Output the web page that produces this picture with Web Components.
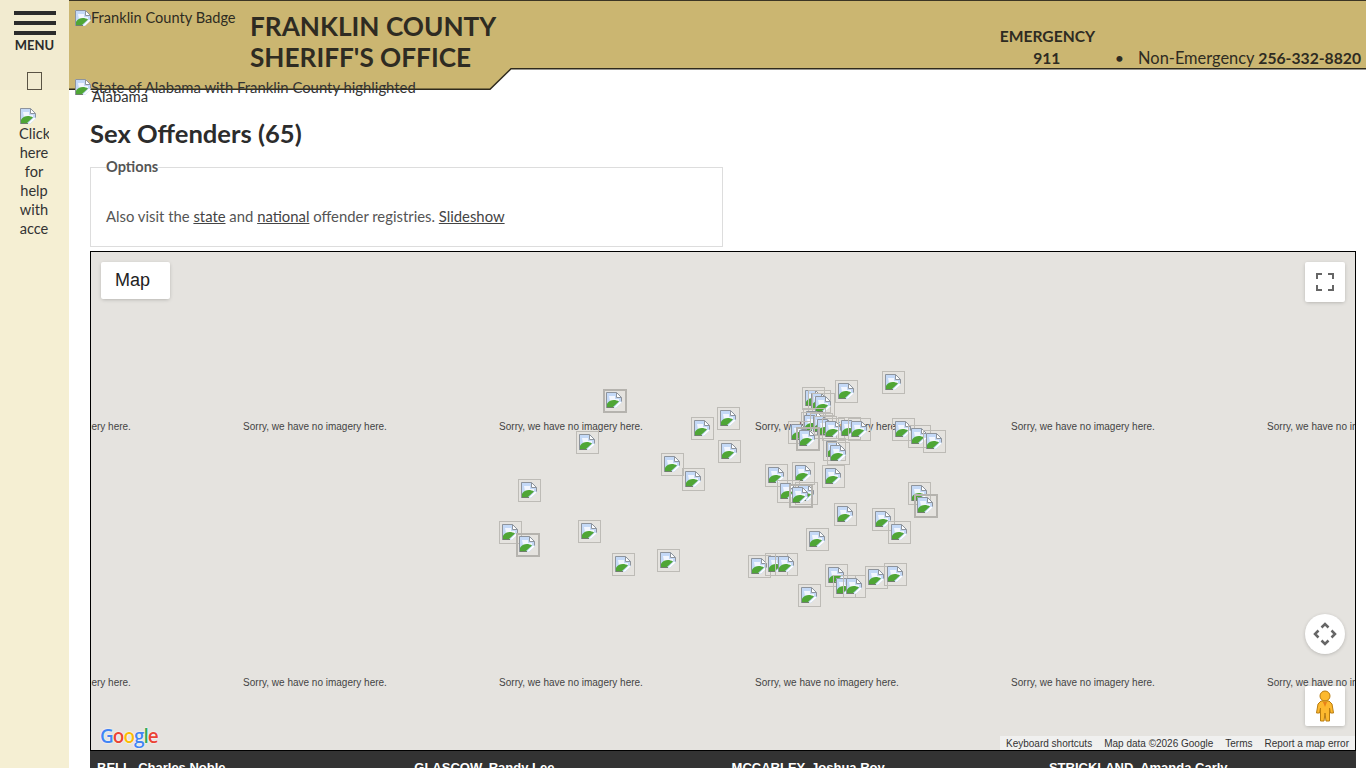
<!DOCTYPE html>
<html lang="en">
<head>
<meta charset="utf-8">
<title>Sex Offenders - Franklin County Sheriff's Office</title>
<style>
  html, body { margin: 0; height: 100%; overflow: hidden; background: #fff; }
  body { font-family: Lato, "Liberation Sans", sans-serif; color: #333; }
</style>
</head>
<body>
<sheriff-page>
  <side-bar slot="side"></side-bar>
  <site-header slot="head"></site-header>
  <page-content slot="main">
    <offender-map></offender-map>
    <offender-list></offender-list>
  </page-content>
</sheriff-page>

<script>
// chrome's broken image picture, used everywhere the site lost its images
const brokenIcon = /* html */ `
  <svg class="broken" width="16" height="16" viewBox="0 0 16 16" aria-hidden="true">
    <path d="M0 0H10.500L16 5.500V10L10 16H0Z" fill="#c4d9f7"/>
    <path d="M10.500 1L15 5.500H10.500Z" fill="#fff"/>
    <path d="M3 4H9V7H13V9H4Z" fill="#f2f6fe"/>
    <path d="M1 15V11.500C4 7.500 9 7 13 9.500L7 15Z" fill="#4fa636"/>
    <path d="M8 15.500L14 9.500L15.500 10.500L10 15.500Z" fill="#fff"/>
    <path d="M.5 15.500V.5H10.500L15.500 5.500V9.500" fill="none" stroke="#8e949c"/>
    <path d="M10.500 .5V5.500H15.500" fill="none" stroke="#8e949c"/>
    <path d="M.5 15.500H8" fill="none" stroke="#6f7f6c"/>
  </svg>`;

class BrokenImg extends HTMLElement {
  constructor() {
    super();
    this.attachShadow({ mode: 'open' });
    this.shadowRoot.innerHTML = /* html */ `
      <style>
        :host { display: inline-block; vertical-align: top; line-height: 0; white-space: nowrap; }
        .broken { display: inline-block; vertical-align: top; }
        .alt { line-height: 16px; vertical-align: top; }
      </style>
      ${brokenIcon}<span class="alt"><slot></slot></span>`;
  }
}
customElements.define('broken-img', BrokenImg);

class SheriffPage extends HTMLElement {
  constructor() {
    super();
    this.attachShadow({ mode: 'open' });
    this.shadowRoot.innerHTML = /* html */ `
      <style>
        :host { display: grid; grid-template-columns: 69px 1fr; grid-template-rows: 90px 1fr; height: 768px; overflow: hidden; }
        .side { grid-row: 1 / 3; grid-column: 1; display: flex; min-height: 0; }
        .head { grid-row: 1; grid-column: 2; display: flex; min-width: 0; }
        .main { grid-row: 2; grid-column: 2; min-width: 0; min-height: 0; }
      </style>
      <div class="side"><slot name="side"></slot></div>
      <div class="head"><slot name="head"></slot></div>
      <div class="main"><slot name="main"></slot></div>`;
  }
}
customElements.define('sheriff-page', SheriffPage);

class SideBar extends HTMLElement {
  constructor() {
    super();
    this.attachShadow({ mode: 'open' });
    this.shadowRoot.innerHTML = /* html */ `
      <style>
        :host { display: flex; flex-direction: column; width: 69px; background: #f5efd3; }
        .top { height: 90px; box-sizing: border-box; background: #f2ebd0; padding-top: 11px; display: flex; flex-direction: column; align-items: center; }
        .bars { width: 42px; display: flex; flex-direction: column; gap: 6px; }
        .bars i { display: block; height: 4px; background: #2b2b2b; }
        .label { font-weight: 700; font-size: 13px; line-height: 16px; color: #2b2b2b; margin-top: 2px; }
        .tofu { width: 13px; height: 16px; border: 1px solid #5a5344; margin-top: 19px; }
        .help { margin: 18px 0 0 19px; width: 30px; overflow: hidden; text-align: center; font-size: 14.6px; line-height: 19px; color: #333; }
        .help .broken { display: block; margin-left: 1px; }
      </style>
      <div class="top">
        <div class="bars"><i></i><i></i><i></i></div>
        <div class="label">MENU</div>
        <div class="tofu"></div>
      </div>
      <div class="help">${brokenIcon}Click here for help with acce</div>`;
  }
}
customElements.define('side-bar', SideBar);

class SiteHeader extends HTMLElement {
  constructor() {
    super();
    this.attachShadow({ mode: 'open' });
    this.shadowRoot.innerHTML = /* html */ `
      <style>
        :host { display: block; flex: 1; position: relative; height: 90px; color: #2e2b22; }
        .shape { position: absolute; left: 0; top: 0; }
        .row { position: relative; display: flex; height: 100%; box-sizing: border-box; padding: 10px 5px 0 6px; }
        .badge { width: 175px; font-size: 14.6px; }
        .title { margin: 1px 0 0; font-size: 26.2px; line-height: 31px; font-weight: 700; color: #2e2b22; }
        .phones { margin-left: auto; display: flex; align-items: flex-end; height: 59px; line-height: 22px; }
        .emergency { text-align: center; font-size: 15.6px; font-weight: 700; width: 94px; margin: 0 21px 0 1px; }
        .dot { font-size: 16px; margin-right: 14px; }
        .non { font-size: 16.4px; }
        .non b { font-size: 15.7px; }
        .map-alt { position: absolute; left: 6px; top: 79px; font-size: 14.85px; color: #333; }
        .map-name { position: absolute; left: 23px; top: 88px; font-size: 14.85px; line-height: 16px; color: #333; }
      </style>
      <svg class="shape" width="1297" height="90" viewBox="0 0 1297 90">
        <path d="M0 1H1297V68.500H442L421 89H0Z" fill="#cbb671"/>
        <path d="M0 .5H1297" stroke="#3b3524" stroke-width="1"/>
        <path d="M0 89.300H421L442 68.800H1297" fill="none" stroke="#2f2a1c" stroke-width="1.500"/>
      </svg>
      <div class="row">
        <div class="badge"><broken-img>Franklin County Badge</broken-img></div>
        <h1 class="title">FRANKLIN COUNTY<br>SHERIFF'S OFFICE</h1>
        <div class="phones">
          <div class="emergency">EMERGENCY<br>911</div>
          <div class="dot">&bull;</div>
          <div class="non">Non-Emergency <b>256-332-8820</b></div>
        </div>
      </div>
      <div class="map-alt"><broken-img>State of Alabama with Franklin County highlighted</broken-img></div>
      <div class="map-name">Alabama</div>`;
  }
}
customElements.define('site-header', SiteHeader);

class PageContent extends HTMLElement {
  constructor() {
    super();
    this.attachShadow({ mode: 'open' });
    this.shadowRoot.innerHTML = /* html */ `
      <style>
        :host { display: block; padding: 0 10px 0 21px; }
        h2 { margin: 27px 0 0; font-size: 25.6px; line-height: 32px; font-weight: 700; color: #2c2c2c; }
        fieldset { margin: 10px 0 4px; width: 633px; height: 88px; box-sizing: border-box; border: 1px solid #ddd; padding: 0 15px; color: #555; font-size: 14.85px; }
        legend { padding: 0; font-size: 14.6px; font-weight: 700; line-height: 16px; color: #555; }
        p { margin: 32px 0 0; line-height: 18px; }
        a { color: #444; text-decoration: underline; }
      </style>
      <h2>Sex Offenders (65)</h2>
      <fieldset>
        <legend>Options</legend>
        <p>Also visit the <a href="#">state</a> and <a href="#">national</a> offender registries. <a href="#">Slideshow</a></p>
      </fieldset>
      <slot></slot>`;
  }
}
customElements.define('page-content', PageContent);

// left, top of each marker box as it sits on the page
const MARKERS = [
  [603, 389, 1], [691, 417], [717, 407], [718, 440], [576, 431], [661, 453], [682, 468],
  [518, 479], [499, 521], [516, 533, 1], [578, 520], [612, 553], [657, 549],
  [882, 371], [835, 380], [802, 387], [808, 390], [812, 393], [892, 418], [908, 425], [923, 430],
  [803, 408], [801, 412], [810, 413], [814, 416], [788, 421], [796, 427, 1], [822, 418], [838, 417],
  [848, 418], [823, 438], [827, 442], [822, 465], [765, 464], [792, 462], [777, 480], [795, 482], [789, 484, 1],
  [908, 482], [914, 494, 1], [834, 503], [872, 508], [888, 521], [806, 528], [748, 555], [765, 553], [775, 553],
  [825, 564], [833, 575], [843, 575], [865, 566], [884, 563], [798, 584]
];

class OffenderMap extends HTMLElement {
  constructor() {
    super();
    this.attachShadow({ mode: 'open' });
    const tiles = [];
    // tiles are 256px apart
    for (const y of [168, 424]) {
      for (let x = -160; x < 1300; x += 256) {
        tiles.push(`<div class="tile" style="left:${x}px;top:${y}px">Sorry, we have no imagery here.</div>`);
      }
    }
    const markers = MARKERS.map(([x, y, thick]) =>
      `<div class="marker${thick ? ' thick' : ''}" style="left:${x - 91}px;top:${y - 252}px">${brokenIcon}</div>`
    ).join('');
    this.shadowRoot.innerHTML = /* html */ `
      <style>
        :host { display: block; position: relative; width: 1266px; height: 500px; box-sizing: border-box; border: 1px solid #000; background: #e5e3df; overflow: hidden; font-family: "Liberation Sans", sans-serif; }
        .tile { position: absolute; width: 256px; text-align: center; font-size: 10px; line-height: 13px; color: #444; white-space: nowrap; }
        .marker { position: absolute; width: 23px; height: 23px; box-sizing: border-box; border: 1px solid #bdbbb6; padding: 2px 0 0 2px; line-height: 0; }
        .marker.thick { border: 2px solid #b5b3ae; padding: 1px 0 0 1px; width: 24px; height: 24px; }
        .ctl { position: absolute; background: #fff; box-shadow: 0 1px 4px -1px rgba(0,0,0,.3); display: flex; align-items: center; justify-content: center; }
        .type { left: 10px; top: 10px; width: 69px; height: 37px; box-sizing: border-box; padding-left: 14px; justify-content: flex-start; border-radius: 2px; font-size: 18px; color: #222; }
        .full { right: 10px; top: 10px; width: 40px; height: 40px; border-radius: 2px; }
        .pan { right: 10px; top: 362px; width: 40px; height: 40px; border-radius: 50%; }
        .peg { right: 10px; top: 434px; width: 40px; height: 40px; border-radius: 2px; }
        .logo { position: absolute; left: 9px; top: 472px; font-family: "Open Sans", sans-serif; font-size: 19px; line-height: 24px; font-weight: 600; letter-spacing: -1px; text-shadow: 0 0 2px #fff, 0 0 1px #fff; }
        .attrib { position: absolute; right: 0; bottom: 0; height: 14px; display: flex; font-size: 10px; line-height: 16px; color: #333; background: rgba(245,245,245,.7); white-space: nowrap; }
        .attrib span { padding: 0 6px; }
      </style>
      ${tiles.join('')}
      ${markers}
      <div class="ctl type">Map</div>
      <div class="ctl full">
        <svg width="18" height="18" viewBox="0 0 18 18" fill="none" stroke="#666" stroke-width="2"><path d="M1 6V1H6M12 1H17V6M17 12V17H12M6 17H1V12"/></svg>
      </div>
      <div class="ctl pan">
        <svg width="24" height="24" viewBox="0 0 24 24" fill="none" stroke="#666" stroke-width="2.500"><path d="M8.500 5.500L12 2L15.500 5.500M8.500 18.500L12 22L15.500 18.500M5.500 8.500L2 12L5.500 15.500M18.500 8.500L22 12L18.500 15.500"/></svg>
      </div>
      <div class="ctl peg">
        <svg width="20" height="32" viewBox="0 0 20 32">
          <circle cx="10" cy="6" r="5" fill="#fdb92e" stroke="#b97c10"/>
          <path d="M6 11H14L17 14L18.500 23H15.500L14.500 18V31H11L10 23L9 31H5.500V18L4.500 23H1.500L3 14Z" fill="#fdb92e" stroke="#b97c10"/>
          <path d="M8 12H12L10 17Z" fill="#e8821a"/>
        </svg>
      </div>
      <div class="logo"><span style="color:#4285f4">G</span><span style="color:#ea4335">o</span><span style="color:#fbbc05">o</span><span style="color:#4285f4">g</span><span style="color:#34a853">l</span><span style="color:#ea4335">e</span></div>
      <div class="attrib"><span>Keyboard shortcuts</span><span>Map data ©2026 Google</span><span>Terms</span><span>Report a map error</span></div>`;
  }
}
customElements.define('offender-map', OffenderMap);

class OffenderList extends HTMLElement {
  constructor() {
    super();
    this.attachShadow({ mode: 'open' });
    this.shadowRoot.innerHTML = /* html */ `
      <style>
        :host { display: grid; grid-template-columns: repeat(4, 317.300px); width: 1266px; box-sizing: border-box; background: #333; padding: 8px 0 20px 7px; color: #fff; font: 700 13px/18px "Liberation Sans", sans-serif; }
      </style>
      <div>BELL, Charles Noble</div>
      <div>GLASCOW, Randy Lee</div>
      <div>MCCARLEY, Joshua Roy</div>
      <div>STRICKLAND, Amanda Carly</div>`;
  }
}
customElements.define('offender-list', OffenderList);
</script>
</body>
</html>
